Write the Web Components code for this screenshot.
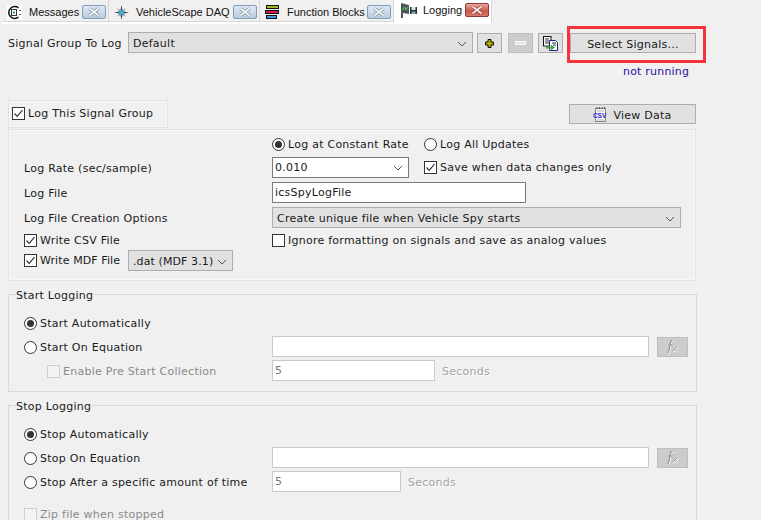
<!DOCTYPE html>
<html>
<head>
<meta charset="utf-8">
<style>
  html, body { margin: 0; padding: 0; background: #f0f0f0; }
  body { width: 761px; height: 520px; overflow: hidden; font: 11px "DejaVu Sans", sans-serif; letter-spacing: .25px; color: #1a1a1a; }
  .toolbar { display: flex; align-items: flex-start; box-sizing: border-box; height: 39px; padding: 8px 0 0 8px; }
  .status { height: 37px; padding-left: 623px; color: #2a12a0; line-height: 17px; letter-spacing: .2px; }
  .log-row { display: flex; justify-content: space-between; width: 688px; margin-left: 8px; height: 29px; }
  .row { display: flex; align-items: center; }
  .lbl { width: 120px; line-height: 23px; }
  .cell { width: 248px; flex: none; display: flex; align-items: center; }
  .low { padding-top: 2px; }
  .gap-b { margin-left: 15px; }
  .dim { margin-left: 7px; padding-top: 2px; color: #a3a3a3; text-shadow: 1px 1px 0 #fff; }
</style>
</head>
<body>
<tab-bar>
  <tab-item label="Messages" icon="msg" w="107"></tab-item>
  <tab-item label="VehicleScape DAQ" icon="daq" w="151"></tab-item>
  <tab-item label="Function Blocks" icon="fb" w="134"></tab-item>
  <tab-item label="Logging" icon="log" w="98" active></tab-item>
</tab-bar>

<div class="toolbar">
  <span class="lbl">Signal Group To Log</span>
  <ui-field kind="select" w="345" text="Default"></ui-field>
  <ui-btn w="25" icon="plus" style="margin:1px 0 0 4px"></ui-btn>
  <ui-btn w="25" icon="minus" disabled style="margin:1px 0 0 6px"></ui-btn>
  <ui-btn w="25" icon="copy" style="margin:1px 0 0 5px"></ui-btn>
  <ui-btn w="126" text="Select Signals..." highlight style="margin:1px 0 0 7px"></ui-btn>
</div>
<div class="status">not running</div>

<div class="log-row">
  <log-tab><ui-check checked label="Log This Signal Group"></ui-check></log-tab>
  <ui-btn w="127" icon="csv" text="View Data" style="margin-top:4px"></ui-btn>
</div>

<settings-panel>
  <div class="row" style="height:18px;margin-top:5px;margin-left:248px">
    <ui-check radio checked label="Log at Constant Rate" w="152"></ui-check>
    <ui-check radio label="Log All Updates"></ui-check>
  </div>
  <div class="row" style="height:21px;margin-top:4px">
    <div class="cell low">Log Rate (sec/sample)</div>
    <ui-field kind="combo" w="137" text="0.010"></ui-field>
    <ui-check checked label="Save when data changes only" class="gap-b"></ui-check>
  </div>
  <div class="row" style="height:21px;margin-top:4px">
    <div class="cell low">Log File</div>
    <ui-field kind="input" w="254" text="icsSpyLogFile"></ui-field>
  </div>
  <div class="row" style="height:21px;margin-top:4px">
    <div class="cell low">Log File Creation Options</div>
    <ui-field kind="select" w="409" text="Create unique file when Vehicle Spy starts"></ui-field>
  </div>
  <div class="row" style="height:20px;margin-top:2px">
    <div class="cell"><ui-check checked label="Write CSV File"></ui-check></div>
    <ui-check label="Ignore formatting on signals and save as analog values"></ui-check>
  </div>
  <div class="row" style="height:21px">
    <ui-check checked label="Write MDF File" w="104" style="letter-spacing:.1px"></ui-check>
    <ui-field kind="select" w="105" text=".dat (MDF 3.1)" style="letter-spacing:.1px"></ui-field>
  </div>
</settings-panel>

<ui-group title="Start Logging" style="margin-top:13px;height:98px">
  <div class="row" style="height:18px;margin-top:19px"><ui-check radio checked label="Start Automatically"></ui-check></div>
  <div class="row" style="height:21px;margin-top:4px">
    <div class="cell low"><ui-check radio label="Start On Equation"></ui-check></div>
    <ui-field kind="input" w="377" disabled></ui-field>
    <ui-btn w="31" icon="fx" disabled style="margin-left:8px"></ui-btn>
  </div>
  <div class="row" style="height:21px;margin-top:3px">
    <div class="cell low" style="padding-left:23px;width:225px"><ui-check disabled label="Enable Pre Start Collection"></ui-check></div>
    <ui-field kind="input" w="163" text="5" disabled></ui-field>
    <span class="dim">Seconds</span>
  </div>
</ui-group>

<ui-group title="Stop Logging" style="margin-top:13px;height:115px;border-bottom:0">
  <div class="row" style="height:18px;margin-top:19px"><ui-check radio checked label="Stop Automatically"></ui-check></div>
  <div class="row" style="height:21px;margin-top:4px">
    <div class="cell low"><ui-check radio label="Stop On Equation"></ui-check></div>
    <ui-field kind="input" w="377" disabled></ui-field>
    <ui-btn w="31" icon="fx" disabled style="margin-left:8px"></ui-btn>
  </div>
  <div class="row" style="height:21px;margin-top:3px">
    <div class="cell low"><ui-check radio label="Stop After a specific amount of time"></ui-check></div>
    <ui-field kind="input" w="129" text="5" disabled></ui-field>
    <span class="dim">Seconds</span>
  </div>
  <div class="row" style="height:12px;margin-top:16px"><ui-check disabled label="Zip file when stopped"></ui-check></div>
</ui-group>

<script>
const ICONS = {
  msg: `<svg width="15" height="15" viewBox="0 0 15 15"><rect width="15" height="15" fill="#fff"/><path d="M11.500 2.800A6 6 0 1 0 11.500 12.200" fill="none" stroke="#111" stroke-width="1.500"/><rect x="4.500" y="4.500" width="5" height="6" fill="#fff" stroke="#333"/><rect x="6" y="6.500" width="2" height="2" fill="#2c9a3c"/><path d="M12 5.500h2M12 9.500h2" stroke="#555"/></svg>`,
  daq: `<svg width="15" height="15" viewBox="0 0 15 15"><path d="M7.500 0L8.700 6.300 15 7.500 8.700 8.700 7.500 15 6.300 8.700 0 7.500 6.300 6.300Z" fill="#33465c"/><path d="M3 3L7.500 6 12 3 9 7.500 12 12 7.500 9 3 12 6 7.500Z" fill="#7d8da0"/><circle cx="7.500" cy="7.500" r="2.300" fill="#3fb4d8"/></svg>`,
  fb: `<svg width="15" height="15" viewBox="0 0 15 15"><rect x="1.500" y=".5" width="12" height="3" fill="#93c020" stroke="#111"/><rect x=".5" y="5.500" width="13" height="3" fill="#d81e4a" stroke="#111"/><rect x="1.500" y="10.500" width="10" height="3" fill="#3a9bd8" stroke="#111"/></svg>`,
  log: `<svg width="18" height="16" viewBox="0 0 18 16"><path d="M1 16V1L9 3V12L3 11V16Z" fill="#4f5656"/><path d="M2.500 8l2-3 1.500 3 1.500-3" fill="none" stroke="#3ee05a"/><rect x="10" y="5" width="7" height="7" fill="#24303c"/><rect x="11.500" y="5" width="4" height="3" fill="#dfe6ee"/><rect x="11.500" y="9.500" width="4" height="2.500" fill="#8fa0b0"/></svg>`,
  plus: `<svg width="9" height="9" viewBox="0 0 9 9"><path d="M3 .5H6V3H8.500V6H6V8.500H3V6H.5V3H3Z" fill="#b3ab00" stroke="#111"/></svg>`,
  minus: `<svg width="11" height="5" viewBox="0 0 11 5"><rect x=".5" y=".5" width="10" height="3" fill="#e6e6e6" stroke="#f7f7f7"/></svg>`,
  copy: `<svg width="15" height="15" viewBox="0 0 15 15"><rect x=".5" y=".5" width="7.500" height="9.500" fill="#fff" stroke="#111"/><path d="M2 3h4M2 5h4M2 7h4" stroke="#333"/><path d="M6.500 4.500H12.500L14.500 6.500V14.500H6.500Z" fill="#fff" stroke="#1a2a70"/><path d="M9 7h4M10 9h3" stroke="#333"/><path d="M3 10.500h5V8.500l4 3-4 3v-2H3Z" fill="#4aa04a"/></svg>`,
  csv: `<svg width="14" height="15" viewBox="0 0 14 15"><rect x="2.500" y="1.500" width="10" height="13" fill="#f4f4ee" stroke="#8a8a8a"/><path d="M4 2V0M6.500 2V0M9 2V0M11.500 2V0" stroke="#555"/><path d="M4 4h7M4 13h7" stroke="#bbb"/><text x="0" y="10.500" font-family="Liberation Sans" font-size="6.400" font-weight="700" letter-spacing="0" fill="#1a1ae0">CSV</text></svg>`,
  fx: `<svg width="13" height="14" viewBox="0 0 13 14"><path d="M1.500 13.500C3.500 13.500 3.500 11 4 8.500L5 3C5.500 1 6.500 .5 7.500 .5" fill="none" stroke="#fff" stroke-width="1.300"/><path d="M1 13C3 13 3 10.500 3.500 8L4.500 2.500C5 .5 6 0 7 0" fill="none" stroke="#8f8f8f" stroke-width="1.200"/><path d="M2.500 5H6.500" stroke="#8f8f8f"/><path d="M7 7.500L11.500 12M11.500 7.500L7 12" stroke="#fff" stroke-width="1.500"/><path d="M6.500 7L11 11.500M11 7L6.500 11.500" stroke="#8f8f8f"/></svg>`
};

class TabBar extends HTMLElement {
  constructor() {
    super();
    this.attachShadow({ mode: "open" });
    this.shadowRoot.innerHTML = `<style>
      :host { display: flex; height: 24px; padding-left: 2px; }
    </style><slot></slot>`;
  }
}

class TabItem extends HTMLElement {
  constructor() {
    super();
    this.attachShadow({ mode: "open" });
  }
  connectedCallback() {
    const active = this.hasAttribute("active");
    this.style.width = this.getAttribute("w") + "px";
    this.shadowRoot.innerHTML = `<style>
      :host { display: flex; align-items: center; box-sizing: border-box; height: 24px; padding: 2px 0 0 5px;
        font: 11px "Liberation Sans", sans-serif; letter-spacing: 0; color: #111;
        border-right: 1px solid #d8d8d8; border-bottom: 2px solid #fff; box-shadow: inset 0 -1px 0 #d8d8d8; }
      :host([active]) { background: #fff; padding: 0 0 2px 6px; box-shadow: none; }
      .ic { width: 22px; flex: none; display: flex; align-items: center; }
      :host([active]) .ic { width: 23px; }
      .txt { flex: 1; white-space: nowrap; }
      .x { flex: none; box-sizing: border-box; width: 24px; height: 14px; margin-right: 2px; border: 1px solid #7f9db9;
        border-radius: 2px; background: linear-gradient(#dfe8f2, #b9cbe0); display: flex; align-items: center; justify-content: center; }
      :host([active]) .x { border-color: #8d3a34; background: linear-gradient(#e9a69c, #c9564a 60%, #d8776a); }
    </style>
    <span class="ic">${ICONS[this.getAttribute("icon")]}</span>
    <span class="txt">${this.getAttribute("label")}</span>
    <span class="x"><svg width="14" height="10" viewBox="0 0 14 10"><path d="M2.500 1.500L11.500 8.500M11.500 1.500L2.500 8.500" stroke="${active ? "#8d3a34" : "#76869a"}" stroke-width="3.400"/><path d="M2.500 1.500L11.500 8.500M11.500 1.500L2.500 8.500" stroke="${active ? "#f6e4e0" : "#f2f5f8"}" stroke-width="2"/></svg></span>`;
  }
}

class UiCheck extends HTMLElement {
  constructor() {
    super();
    this.attachShadow({ mode: "open" });
  }
  connectedCallback() {
    const radio = this.hasAttribute("radio"), on = this.hasAttribute("checked"), off = this.hasAttribute("disabled");
    if (this.getAttribute("w")) this.style.width = this.getAttribute("w") + "px";
    const mark = radio
      ? `<svg width="13" height="13" viewBox="0 0 13 13"><circle cx="6.500" cy="6.500" r="6" fill="#fff" stroke="#333"/>${on ? '<circle cx="6.500" cy="6.500" r="3.500" fill="#333"/>' : ""}</svg>`
      : `<svg width="13" height="13" viewBox="0 0 13 13"><rect x=".5" y=".5" width="12" height="12" fill="${off ? "#f3f3f3" : "#fff"}" stroke="${off ? "#cfcfcf" : "#333"}"/>${on ? '<path d="M2.500 6.500L5.200 9.300 10.500 3.200" fill="none" stroke="#333" stroke-width="1.200"/>' : ""}</svg>`;
    this.shadowRoot.innerHTML = `<style>
      :host { display: inline-flex; align-items: center; gap: 3px; white-space: nowrap; flex: none; }
      :host([disabled]) { color: #8a8a8a; }
      svg { display: block; flex: none; }
    </style>${mark}<span>${this.getAttribute("label")}</span>`;
  }
}

class UiField extends HTMLElement {
  constructor() {
    super();
    this.attachShadow({ mode: "open" });
  }
  connectedCallback() {
    const kind = this.getAttribute("kind");
    this.style.width = this.getAttribute("w") + "px";
    const arrow = kind === "input" ? "" : `<svg width="10" height="6" viewBox="0 0 10 6"><path d="M1 1L5 5 9 1" fill="none" stroke="#555"/></svg>`;
    this.shadowRoot.innerHTML = `<style>
      :host { display: flex; flex: none; align-items: center; justify-content: space-between; box-sizing: border-box; height: 21px;
        padding: 0 5px 0 2px; white-space: nowrap; border: 1px solid #7a7a7a; background: #fff; }
      :host([kind=select]) { background: #e1e1e1; border-color: #adadad; padding: 2px 5px 0 4px; }
      :host([disabled]) { border-color: #c9c9c9; color: #777; }
    </style><span>${this.getAttribute("text") || ""}</span>${arrow}`;
  }
}

class UiBtn extends HTMLElement {
  constructor() {
    super();
    this.attachShadow({ mode: "open" });
  }
  connectedCallback() {
    const icon = this.getAttribute("icon"), text = this.getAttribute("text");
    this.style.width = this.getAttribute("w") + "px";
    const hl = this.hasAttribute("highlight") ? `<div class="hl"></div>` : "";
    this.shadowRoot.innerHTML = `<style>
      :host { display: flex; flex: none; position: relative; align-items: center; justify-content: center; gap: 6px; box-sizing: border-box;
        height: 20px; border: 1px solid #adadad; background: #e1e1e1; white-space: nowrap; }
      :host([disabled]) { background: #ccc; border-color: #bfbfbf; }
      svg { display: block; }
      span { padding-top: 2px; }
      .hl { position: absolute; left: -4px; top: -8px; width: 133px; height: 31px; border: 3px solid #f4333a; }
    </style>${icon ? ICONS[icon] : ""}${text ? `<span>${text}</span>` : ""}${hl}`;
  }
}

class LogTab extends HTMLElement {
  constructor() {
    super();
    this.attachShadow({ mode: "open" });
    this.shadowRoot.innerHTML = `<style>
      :host { display: flex; align-items: center; box-sizing: border-box; width: 160px; height: 28px; padding: 0 0 2px 3px;
        border: 1px solid #e2e2e2; box-shadow: inset 0 0 0 1px #f8f8f8; }
    </style><slot></slot>`;
  }
}

class SettingsPanel extends HTMLElement {
  constructor() {
    super();
    this.attachShadow({ mode: "open" });
    this.shadowRoot.innerHTML = `<style>
      :host { display: block; box-sizing: border-box; width: 688px; height: 152px; margin-left: 8px; padding-left: 15px;
        border: 1px solid #e2e2e2; box-shadow: inset 0 0 0 1px #f8f8f8; }
    </style><slot></slot>`;
  }
}

class UiGroup extends HTMLElement {
  constructor() {
    super();
    this.attachShadow({ mode: "open" });
  }
  connectedCallback() {
    this.shadowRoot.innerHTML = `<style>
      :host { display: block; position: relative; box-sizing: border-box; width: 689px; margin-left: 8px; padding-left: 15px;
        border: 1px solid #d9d9d9; }
      .t { position: absolute; left: 7px; top: -6px; padding-right: 1px; background: #f0f0f0; line-height: 14px; }
    </style><span class="t">${this.getAttribute("title")}</span><slot></slot>`;
  }
}

customElements.define("tab-bar", TabBar);
customElements.define("tab-item", TabItem);
customElements.define("ui-check", UiCheck);
customElements.define("ui-field", UiField);
customElements.define("ui-btn", UiBtn);
customElements.define("log-tab", LogTab);
customElements.define("settings-panel", SettingsPanel);
customElements.define("ui-group", UiGroup);
</script>
</body>
</html>
